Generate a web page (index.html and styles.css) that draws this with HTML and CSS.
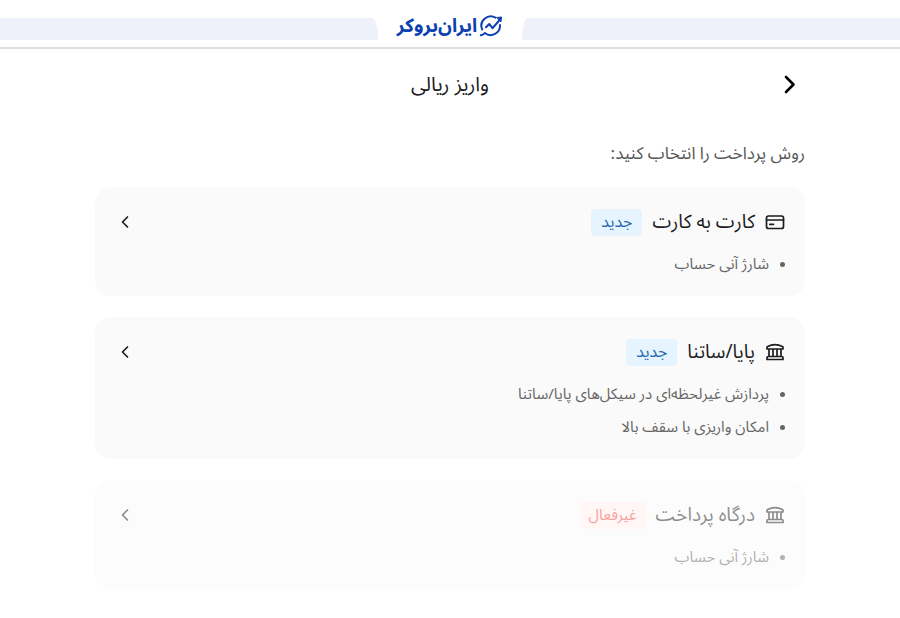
FILE: index.html
```html
<!DOCTYPE html>
<html lang="fa" dir="rtl">
<head>
  <meta charset="UTF-8" />
  <meta name="viewport" content="width=device-width, initial-scale=1.0"/>
  <title>واریز ریالی</title>
  <link rel="stylesheet" href="styles.css">
</head>
<body>

<svg class="sprite" aria-hidden="true">
  <symbol id="bank" viewBox="0 0 20 20">
    <path d="M2 7V5.3Q2 4.7 2.6 4.5Q10 .6 17.4 4.5Q18 4.7 18 5.3V7ZM4 7V14.5M8 7V14.5M12 7V14.5M16 7V14.5M3.2 14.5H16.8Q18 14.5 18 15.7V17.5H2V15.7Q2 14.5 3.2 14.5Z"/>
  </symbol>
  <symbol id="chevron" viewBox="0 0 20 20">
    <path d="M12.5 5L7.5 10L12.5 15"/>
  </symbol>
</svg>

<header class="topbar">
  <div class="stripe"></div>
  <a class="brand" href="#">
    <svg class="brand-icon" viewBox="0 0 24 24" aria-hidden="true">
      <path d="M16.5 3.6A9.4 9.4 0 0 0 3.2 15.5M5.8 19A9.4 9.4 0 0 0 21 11M1.8 21.2Q4.6 20.8 5.8 19M7 13.2L10.2 10L13.6 14.2L21 5.5"/>
      <path class="brand-arrow" d="M18 3.5L22.5 3L22 7.5Z"/>
    </svg>
    <span>ایران‌بروکر</span>
  </a>
  <div class="stripe"></div>
</header>

<main class="page">
  <div class="page-header">
    <button class="back" type="button" aria-label="بازگشت">
      <svg viewBox="0 0 20 20"><path d="M6 2L13.5 9.5L6 17"/></svg>
    </button>
    <h1>واریز ریالی</h1>
  </div>

  <p class="prompt">روش پرداخت را انتخاب کنید:</p>

  <div class="methods">
    <article class="card">
      <div class="card-header">
        <svg class="icon" viewBox="0 0 20 20" aria-hidden="true">
          <rect x="1.5" y="4" width="17" height="12.5" rx="2"/>
          <path d="M1.5 8H18.5M4.8 12.3H8.5"/>
        </svg>
        <h2>کارت به کارت</h2>
        <span class="badge">جدید</span>
        <button class="open" type="button" aria-label="کارت به کارت">
          <svg class="icon"><use href="#chevron"/></svg>
        </button>
      </div>
      <ul>
        <li>شارژ آنی حساب</li>
      </ul>
    </article>

    <article class="card">
      <div class="card-header">
        <svg class="icon" aria-hidden="true"><use href="#bank"/></svg>
        <h2>پایا/ساتنا</h2>
        <span class="badge">جدید</span>
        <button class="open" type="button" aria-label="پایا/ساتنا">
          <svg class="icon"><use href="#chevron"/></svg>
        </button>
      </div>
      <ul>
        <li>پردازش غیرلحظه‌ای در سیکل‌های پایا/ساتنا</li>
        <li>امکان واریزی با سقف بالا</li>
      </ul>
    </article>

    <article class="card disabled">
      <div class="card-header">
        <svg class="icon" aria-hidden="true"><use href="#bank"/></svg>
        <h2>درگاه پرداخت</h2>
        <span class="badge badge-off">غیرفعال</span>
        <button class="open" type="button" aria-label="درگاه پرداخت" disabled>
          <svg class="icon"><use href="#chevron"/></svg>
        </button>
      </div>
      <ul>
        <li>شارژ آنی حساب</li>
      </ul>
    </article>
  </div>
</main>

</body>
</html>
```
FILE: styles.css
```css
* {
  box-sizing: border-box;
}

body {
  margin: 0;
  background: #fff;
  color: #1c1c1e;
  font-family: "Noto Sans Arabic", "Vazirmatn", "DejaVu Sans", sans-serif;
}

h1, h2, p, ul {
  margin: 0;
  padding: 0;
  font-weight: normal;
}

svg {
  display: block;
  fill: none;
  stroke: currentColor;
  stroke-linecap: round;
  stroke-linejoin: round;
}

button {
  display: flex;
  padding: 0;
  border: 0;
  background: none;
  color: inherit;
  cursor: pointer;
}

.sprite {
  position: absolute;
  width: 0;
  height: 0;
}

.topbar {
  display: flex;
  align-items: center;
  padding-top: 10px;
  height: 49px;
  border-bottom: 2px solid #dedede;
}

.stripe {
  flex: 1;
  height: 22px;
  background: #eef1fa;
}

/* the stripes curve away from the logo tab */
.stripe:first-child {
  border-top-left-radius: 6px 20px;
}

.stripe:last-child {
  border-top-right-radius: 6px 20px;
}

.brand {
  display: flex;
  align-items: center;
  justify-content: center;
  gap: 2px;
  width: 144px;
  height: 36px;
  padding-bottom: 6px;
  color: #0b41b0;
  font-size: 19px;
  font-weight: bold;
  line-height: 24px;
  white-space: nowrap;
  text-decoration: none;
}

.brand-icon {
  width: 24px;
  height: 24px;
  stroke-width: 2;
}

.brand-arrow {
  fill: currentColor;
  stroke-width: 1;
}

.page {
  max-width: 750px;
  margin: 0 auto;
  padding: 20px;
}

.page-header {
  display: grid;
  grid-template-columns: 30px 1fr 30px;
  align-items: center;
  height: 32px;
}

.back {
  justify-content: center;
}

.back svg {
  width: 20px;
  height: 20px;
  stroke: #000;
  stroke-width: 2.6;
}

h1 {
  font-size: 20px;
  line-height: 32px;
  text-align: center;
}

.prompt {
  margin: 37px 0 17px;
  color: #555;
  font-size: 17px;
  line-height: 32px;
}

.methods {
  display: flex;
  flex-direction: column;
  gap: 21px;
}

.card {
  padding: 20px 20px 15px;
  border-radius: 16px;
  background: #fafafa;
}

.card-header {
  display: flex;
  align-items: center;
  gap: 10px;
  height: 30px;
  margin-bottom: 11px;
}

.icon {
  width: 20px;
  height: 20px;
  stroke-width: 1.7;
}

h2 {
  font-size: 19px;
  line-height: 30px;
}

.badge {
  padding: 0 10px;
  border-radius: 4px;
  background: #e5f4fe;
  color: #2868ad;
  font-size: 16px;
  line-height: 27px;
}

.badge-off {
  padding: 0 9px;
  background: #ffefed;
  color: #f0443e;
  font-size: 15px;
}

.open {
  margin-right: auto;
}

ul {
  list-style: none;
}

li {
  display: flex;
  align-items: center;
  gap: 11px;
  color: #666;
  font-size: 15px;
  line-height: 33px;
}

li::before {
  content: "";
  width: 5px;
  height: 5px;
  border-radius: 50%;
  background: currentColor;
}

.disabled {
  opacity: 0.5;
}
```
